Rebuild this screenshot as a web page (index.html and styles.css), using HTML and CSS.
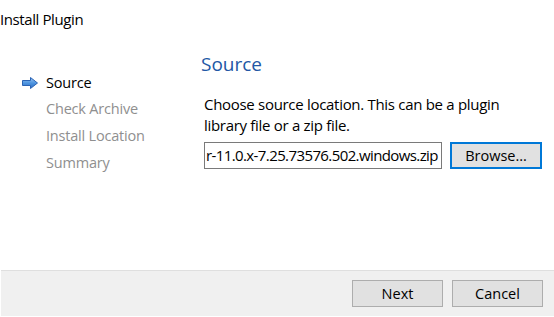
FILE: index.html
```html
<!DOCTYPE html>
<html lang="en">
<head>
    <meta charset="UTF-8">
    <title>Install Plugin</title>
    <link rel="stylesheet" href="styles.css">
</head>
<body>
    <div class="window">
        <div class="title">Install Plugin</div>
        <div class="main">
            <ul class="steps">
                <li class="current">
                    <svg class="arrow" width="16" height="12" viewBox="0 0 16 12">
                        <defs>
                            <linearGradient id="ag" x1="0" y1="0" x2="0" y2="1">
                                <stop offset="0" stop-color="#9cc6f2"/>
                                <stop offset="0.5" stop-color="#4e95e0"/>
                                <stop offset="1" stop-color="#2f6fc4"/>
                            </linearGradient>
                        </defs>
                        <path d="M0.5 3.5 H8.5 V0.5 L15.5 6 L8.5 11.5 V8.5 H0.5 Z" fill="url(#ag)" stroke="#2a63b4" stroke-width="1" stroke-linejoin="round"/>
                    </svg>
                    <span>Source</span>
                </li>
                <li>Check Archive</li>
                <li>Install Location</li>
                <li>Summary</li>
            </ul>
            <div class="content">
                <h2>Source</h2>
                <p>Choose source location. This can be a plugin library file or a zip file.</p>
                <div class="source-row">
                    <div class="field">r-11.0.x-7.25.73576.502.windows.zip</div>
                    <button class="btn focused">Browse...</button>
                </div>
            </div>
        </div>
        <div class="footer">
            <button class="btn">Next</button>
            <button class="btn">Cancel</button>
        </div>
    </div>
</body>
</html>
```

FILE: styles.css
```css
body {
    margin: 0;
    font-family: "Open Sans", "Noto Sans", sans-serif;
    font-size: 15px;
    color: #000000;
    background: #ffffff;
}
.window {
    width: 554px;
    height: 317px;
    display: flex;
    flex-direction: column;
    overflow: hidden;
}
.title {
    padding: 9px 0 0 0;
    height: 40px;
    line-height: 20px;
    letter-spacing: -0.4px;
}
.main {
    flex: 1;
    display: flex;
}
.steps {
    list-style: none;
    margin: 0;
    padding: 20px 0 0 22px;
    width: 182px;
    color: #8f8f8f;
    font-size: 14.5px;
}
.steps li {
    height: 27px;
    line-height: 26px;
    padding-left: 24px;
    letter-spacing: -0.2px;
}
.steps li.current {
    display: flex;
    align-items: center;
    padding-left: 0;
    color: #000000;
}
.arrow {
    margin-right: 8px;
}
.content {
    flex: 1;
    padding-top: 3px;
}
.content h2 {
    margin: 0 0 0 -3px;
    font-size: 19px;
    font-weight: normal;
    line-height: 24px;
    color: #2257a5;
}
.content p {
    margin: 18px 0 6px 0;
    width: 320px;
    line-height: 21px;
    letter-spacing: -0.3px;
}
.source-row {
    display: flex;
    gap: 8px;
}
.field {
    width: 235px;
    height: 25px;
    border: 1px solid #7a7a7a;
    padding-left: 1px;
    line-height: 25px;
    white-space: nowrap;
    overflow: hidden;
    letter-spacing: -0.6px;
}
.btn {
    width: 91px;
    height: 27px;
    border: 1px solid #adadad;
    background: #e1e1e1;
    font-family: inherit;
    font-size: 14.5px;
    color: #000000;
    padding: 0;
}
.btn.focused {
    border: 2px solid #0078d7;
    width: 92px;
}
.footer {
    height: 46px;
    margin: 0 0 1px 1px;
    border-top: 1px solid #dfdfdf;
    background: #f0f0f0;
    display: flex;
    justify-content: flex-end;
    align-items: flex-start;
    gap: 9px;
    padding: 9px 11px 0 0;
    box-sizing: border-box;
}
```
